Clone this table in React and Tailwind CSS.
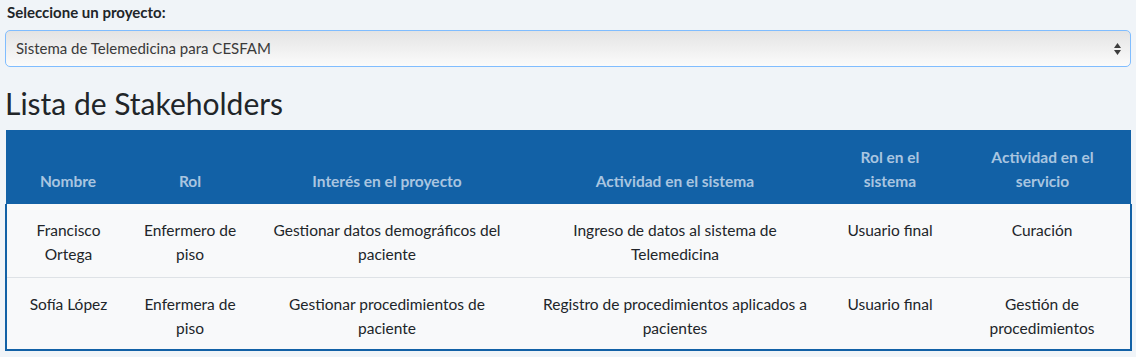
import React from "react";

const rows = [
  ["Francisco Ortega", "Enfermero de piso", "Gestionar datos demográficos del paciente", "Ingreso de datos al sistema de Telemedicina", "Usuario final", "Curación"],
  ["Sofía López", "Enfermera de piso", "Gestionar procedimientos de paciente", "Registro de procedimientos aplicados a pacientes", "Usuario final", "Gestión de procedimientos"],
];

const heads = ["Nombre", "Rol", "Interés en el proyecto", "Actividad en el sistema", "Rol en el sistema", "Actividad en el servicio"];
const widths = ["w-[124px]", "w-[120px]", "w-[274px]", "w-[302px]", "w-[128px]", "w-[177px]"];

export default function App() {
  return (
    <div className="min-h-[357px] bg-[#f0f4f8] px-[5px] pt-[2px] text-[#212529]" style={{ fontFamily: "Lato, 'Open Sans', sans-serif" }}>
      <div className="pl-[2px] text-[15px] font-bold leading-[20px] text-[#212529]">Seleccione un proyecto:</div>
      <div className="mt-[8px] flex h-[37px] items-center justify-between rounded-[5px] border border-[#80bdff] bg-gradient-to-b from-[#e4e4e4] to-[#fbfbfb] pl-[10px] pr-[8px] text-[15px] text-[#3a3a3a]">
        <span>Sistema de Telemedicina para CESFAM</span>
        <svg width="9" height="14" viewBox="0 0 9 14">
          <path d="M4.5 1 L8 6 L1 6 Z" fill="#3d3d3d" />
          <path d="M4.5 13 L8 8 L1 8 Z" fill="#3d3d3d" />
        </svg>
      </div>
      <h2 className="mt-[18px] text-[30px] leading-[36px] font-normal text-[#212529]">Lista de Stakeholders</h2>
      <table className="mt-[9px] w-[1125px] table-fixed border-collapse text-center text-[15.5px] leading-[24px]">
        <colgroup>
          {widths.map((w, i) => (
            <col key={i} className={w} />
          ))}
        </colgroup>
        <thead>
          <tr className="bg-[#1261a6]">
            {heads.map((h, i) => (
              <th key={i} className="h-[74px] px-[12px] pb-[11px] align-bottom text-[15.5px] font-bold leading-[24px] text-[#a9c5e0]">
                {h}
              </th>
            ))}
          </tr>
        </thead>
        <tbody className="bg-[#f8f9fa]">
          {rows.map((r, ri) => (
            <tr key={ri} className={ri === 0 ? "border-b border-[#dee2e6]" : ""}>
              {r.map((c, ci) => (
                <td
                  key={ci}
                  className={
                    "h-[73px] px-[12px] align-top pt-[14px] text-[#212529] " +
                    (ci === 0 ? "border-l-2 border-l-[#1261a6] " : "") +
                    (ci === 5 ? "border-r-2 border-r-[#1261a6] " : "") +
                    (ri === 1 ? "border-b-2 border-b-[#1261a6]" : "")
                  }
                >
                  {c}
                </td>
              ))}
            </tr>
          ))}
        </tbody>
      </table>
    </div>
  );
}
